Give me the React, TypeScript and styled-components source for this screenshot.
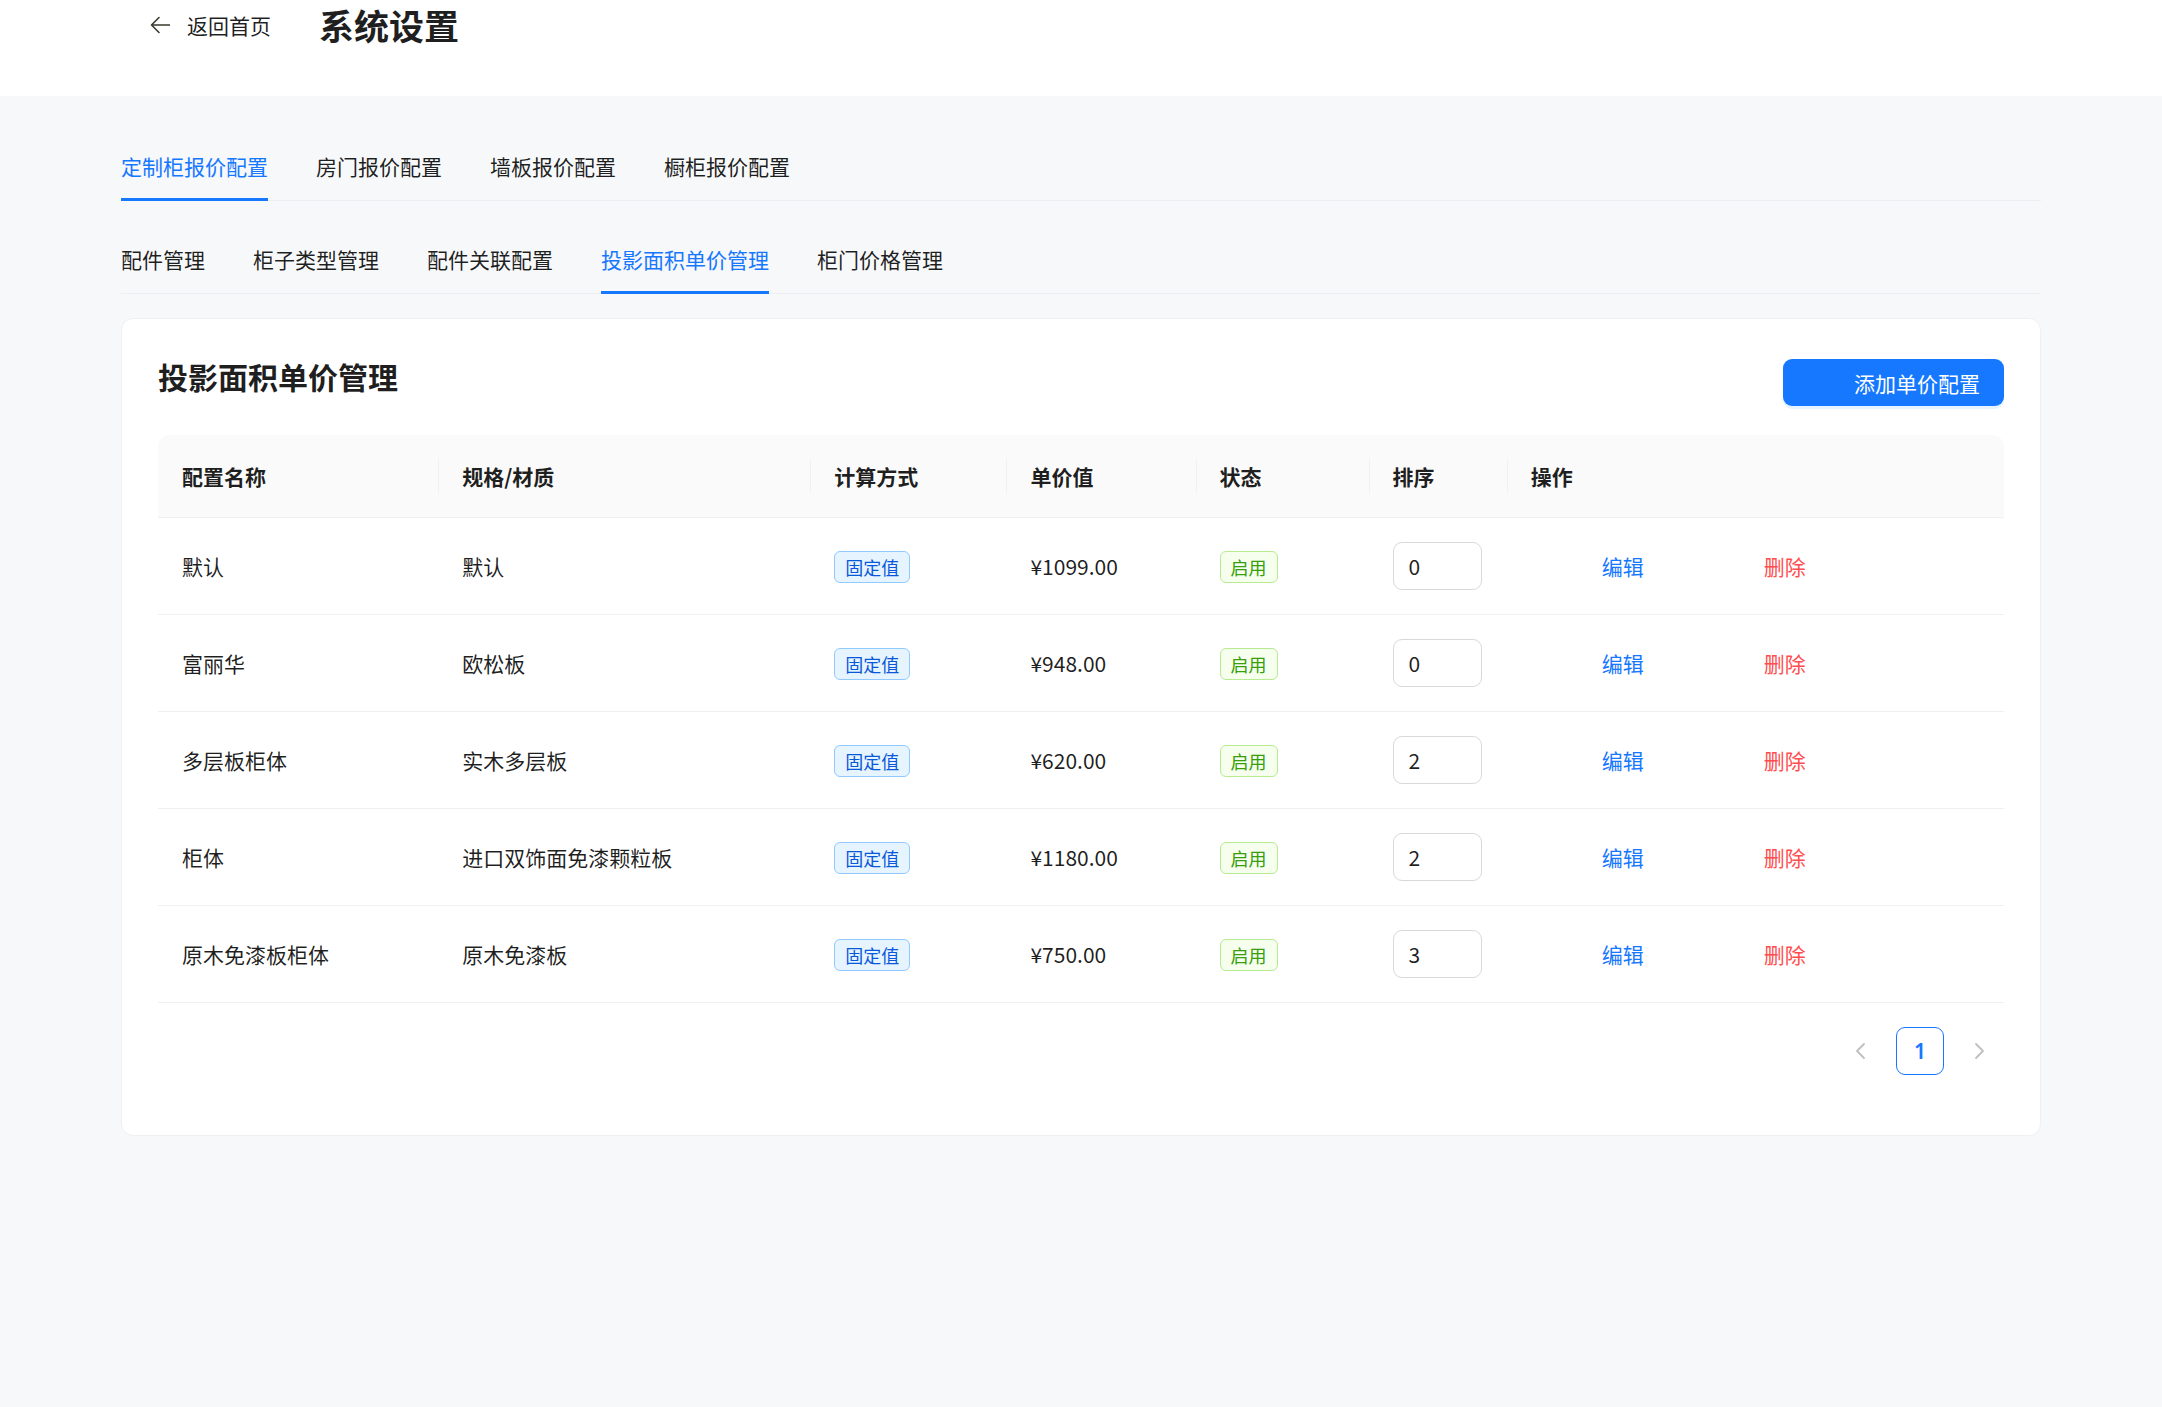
import React from "react";
import styled, { createGlobalStyle } from "styled-components";

const GlobalStyle = createGlobalStyle`
  html, body {
    margin: 0;
    padding: 0;
    background: #f7f8fa;
    font-family: "Noto Sans CJK SC", "Noto Sans", sans-serif;
    color: rgba(0, 0, 0, 0.88);
  }
  * { box-sizing: border-box; }
`;

const Page = styled.div`
  min-height: 1407px;
  background: #f7f8fa;
`;

const Header = styled.header`
  height: 96px;
  background: #ffffff;
`;

const HeaderInner = styled.div`
  max-width: 1920px;
  margin: 0 auto;
  height: 50px;
  display: flex;
  align-items: center;
  padding-left: 29px;
`;

const BackLink = styled.a`
  display: flex;
  align-items: center;
  gap: 17px;
  font-size: 21px;
  line-height: 1;
  color: rgba(0, 0, 0, 0.88);
  text-decoration: none;
  cursor: pointer;
`;

const PageTitle = styled.h1`
  margin: 0 0 0 48px;
  font-size: 35px;
  font-weight: 700;
  line-height: 1.2;
  color: #1f1f1f;
`;

const Main = styled.main`
  max-width: 1920px;
  margin: 0 auto;
  padding-top: 36px;
`;

const TabNav = styled.nav`
  display: flex;
  gap: 48px;
  border-bottom: 1px solid #eceef2;
  margin-bottom: 24px;
`;

const Tab = styled.div<{ $active?: boolean }>`
  position: relative;
  padding: 18px 0;
  font-size: 21px;
  line-height: 32px;
  color: ${(p) => (p.$active ? "#1677ff" : "rgba(0, 0, 0, 0.88)")};
  cursor: pointer;
  &::after {
    content: "";
    position: absolute;
    left: 0;
    right: 0;
    bottom: -1px;
    height: 3px;
    background: ${(p) => (p.$active ? "#1677ff" : "transparent")};
  }
`;

const Card = styled.section`
  background: #ffffff;
  border: 1px solid #f0f0f0;
  border-radius: 12px;
  padding: 36px;
`;

const CardHeader = styled.div`
  display: flex;
  justify-content: space-between;
  align-items: flex-start;
  margin-bottom: 29px;
`;

const CardTitle = styled.h2`
  margin: 0;
  font-size: 30px;
  font-weight: 600;
  line-height: 42px;
  color: rgba(0, 0, 0, 0.88);
`;

const PrimaryButton = styled.button`
  margin-top: 4px;
  width: 221px;
  height: 47px;
  display: flex;
  align-items: center;
  justify-content: flex-end;
  padding: 0 24px;
  border: none;
  border-radius: 9px;
  background: #1677ff;
  color: #ffffff;
  font-family: inherit;
  font-size: 21px;
  box-shadow: 0 3px 0 rgba(5, 145, 255, 0.1);
  cursor: pointer;
`;

const Table = styled.table`
  width: 100%;
  border-collapse: separate;
  border-spacing: 0;
  table-layout: fixed;
`;

const Th = styled.th`
  position: relative;
  background: #fafafa;
  padding: 24px;
  text-align: left;
  font-size: 21px;
  font-weight: 600;
  line-height: 34px;
  color: rgba(0, 0, 0, 0.88);
  border-bottom: 1px solid #f0f0f0;
  &:first-child { border-top-left-radius: 12px; }
  &:last-child { border-top-right-radius: 12px; }
  & + &::before {
    content: "";
    position: absolute;
    left: 0;
    top: 50%;
    transform: translateY(-50%);
    width: 1px;
    height: 33px;
    background: #f0f0f0;
  }
`;

const Td = styled.td`
  padding: 24px;
  font-size: 21px;
  line-height: 32px;
  color: rgba(0, 0, 0, 0.88);
  border-bottom: 1px solid #f0f0f0;
  vertical-align: middle;
`;

const Tag = styled.span<{ $tone: "blue" | "green" }>`
  display: inline-block;
  padding: 0 10px;
  font-size: 18px;
  line-height: 30px;
  border-radius: 6px;
  border: 1px solid ${(p) => (p.$tone === "blue" ? "#91caff" : "#b7eb8f")};
  background: ${(p) => (p.$tone === "blue" ? "#e6f4ff" : "#f6ffed")};
  color: ${(p) => (p.$tone === "blue" ? "#0958d9" : "#389e0d")};
`;

const SortInput = styled.input`
  display: block;
  width: 89px;
  height: 48px;
  padding: 0 15px;
  border: 1px solid #d9d9d9;
  border-radius: 9px;
  font-family: inherit;
  font-size: 21px;
  color: rgba(0, 0, 0, 0.88);
  background: #ffffff;
  outline: none;
`;

const Actions = styled.div`
  display: flex;
  align-items: center;
  padding-left: 71px;
  gap: 120px;
`;

const LinkAction = styled.a<{ $danger?: boolean }>`
  font-size: 21px;
  color: ${(p) => (p.$danger ? "#ff4d4f" : "#1677ff")};
  cursor: pointer;
`;

const Pagination = styled.ul`
  list-style: none;
  margin: 24px 0;
  padding: 0;
  display: flex;
  justify-content: flex-end;
  gap: 12px;
`;

const PageItem = styled.li<{ $active?: boolean }>`
  width: 48px;
  height: 48px;
  display: flex;
  align-items: center;
  justify-content: center;
  border-radius: 9px;
  border: 1px solid ${(p) => (p.$active ? "#1677ff" : "transparent")};
  color: ${(p) => (p.$active ? "#1677ff" : "rgba(0,0,0,0.25)")};
  font-size: 21px;
  font-weight: 600;
  font-family: "Noto Sans", sans-serif;
`;

const BackArrow = () => (
  <svg width="20" height="18" viewBox="0 0 20 18" fill="none">
    <path d="M19.5 9H1.5M9 1.5L1.5 9L9 16.5" stroke="#3a3a2e" strokeWidth="1.6" strokeLinecap="round" strokeLinejoin="round" />
  </svg>
);

const Chevron = ({ dir }: { dir: "left" | "right" }) => (
  <svg width="12" height="18" viewBox="0 0 12 18" fill="none">
    <path
      d={dir === "left" ? "M10 2L3 9L10 16" : "M2 2L9 9L2 16"}
      stroke="#bfbfbf"
      strokeWidth="1.8"
      strokeLinecap="round"
      strokeLinejoin="round"
    />
  </svg>
);

const topTabs = ["定制柜报价配置", "房门报价配置", "墙板报价配置", "橱柜报价配置"];
const subTabs = ["配件管理", "柜子类型管理", "配件关联配置", "投影面积单价管理", "柜门价格管理"];
const columns = [
  { title: "配置名称", width: 280 },
  { title: "规格/材质", width: 372 },
  { title: "计算方式", width: 196 },
  { title: "单价值", width: 189 },
  { title: "状态", width: 173 },
  { title: "排序", width: 138 },
  { title: "操作", width: 497 },
];
const rows = [
  { name: "默认", spec: "默认", price: "¥1099.00", sort: "0" },
  { name: "富丽华", spec: "欧松板", price: "¥948.00", sort: "0" },
  { name: "多层板柜体", spec: "实木多层板", price: "¥620.00", sort: "2" },
  { name: "柜体", spec: "进口双饰面免漆颗粒板", price: "¥1180.00", sort: "2" },
  { name: "原木免漆板柜体", spec: "原木免漆板", price: "¥750.00", sort: "3" },
];

export default function App() {
  return (
    <Page>
      <GlobalStyle />
      <Header>
        <HeaderInner>
          <BackLink>
            <BackArrow />
            返回首页
          </BackLink>
          <PageTitle>系统设置</PageTitle>
        </HeaderInner>
      </Header>
      <Main>
        <TabNav>
          {topTabs.map((t, i) => (
            <Tab key={t} $active={i === 0}>{t}</Tab>
          ))}
        </TabNav>
        <TabNav>
          {subTabs.map((t, i) => (
            <Tab key={t} $active={i === 3}>{t}</Tab>
          ))}
        </TabNav>
        <Card>
          <CardHeader>
            <CardTitle>投影面积单价管理</CardTitle>
            <PrimaryButton>添加单价配置</PrimaryButton>
          </CardHeader>
          <Table>
            <colgroup>
              {columns.map((c) => (
                <col key={c.title} style={{ width: c.width }} />
              ))}
            </colgroup>
            <thead>
              <tr>
                {columns.map((c) => (
                  <Th key={c.title}>{c.title}</Th>
                ))}
              </tr>
            </thead>
            <tbody>
              {rows.map((r) => (
                <tr key={r.name}>
                  <Td>{r.name}</Td>
                  <Td>{r.spec}</Td>
                  <Td><Tag $tone="blue">固定值</Tag></Td>
                  <Td>{r.price}</Td>
                  <Td><Tag $tone="green">启用</Tag></Td>
                  <Td><SortInput defaultValue={r.sort} /></Td>
                  <Td>
                    <Actions>
                      <LinkAction>编辑</LinkAction>
                      <LinkAction $danger>删除</LinkAction>
                    </Actions>
                  </Td>
                </tr>
              ))}
            </tbody>
          </Table>
          <Pagination>
            <PageItem><Chevron dir="left" /></PageItem>
            <PageItem $active>1</PageItem>
            <PageItem><Chevron dir="right" /></PageItem>
          </Pagination>
        </Card>
      </Main>
    </Page>
  );
}
